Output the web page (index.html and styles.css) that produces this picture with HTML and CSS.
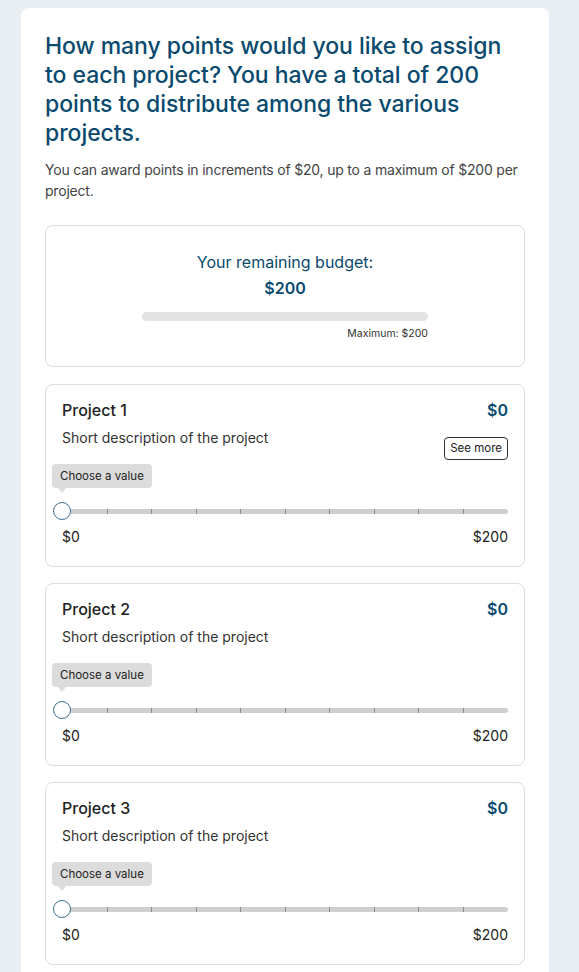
FILE: index.html
```html
<!DOCTYPE html>
<html lang="en">
<head>
<meta charset="utf-8">
<title>Budget allocation</title>
<link rel="stylesheet" href="styles.css">
</head>
<body>
<main class="panel">
  <h1 class="question">How many points would you like to assign to each project? You have a total of 200 points to distribute among the various projects.</h1>
  <p class="hint">You can award points in increments of $20, up to a maximum of $200 per project.</p>

  <section class="budget">
    <div class="budget-label">Your remaining budget:</div>
    <div class="budget-amount">$200</div>
    <div class="budget-bar-wrap">
      <div class="budget-bar"></div>
      <div class="budget-max">Maximum: $200</div>
    </div>
  </section>

  <section class="project">
    <div class="project-head">
      <div class="project-title">Project 1</div>
      <div class="project-value">$0</div>
      <div class="project-desc">Short description of the project</div>
      <button class="see-more">See more</button>
    </div>
    <div class="tooltip">Choose a value</div>
    <div class="slider">
      <div class="track">
        <span class="tick"></span><span class="tick"></span><span class="tick"></span><span class="tick"></span><span class="tick"></span><span class="tick"></span><span class="tick"></span><span class="tick"></span><span class="tick"></span><span class="tick"></span><span class="tick end"></span>
      </div>
      <div class="thumb"></div>
    </div>
    <div class="range-labels"><span>$0</span><span>$200</span></div>
  </section>

  <section class="project">
    <div class="project-head">
      <div class="project-title">Project 2</div>
      <div class="project-value">$0</div>
      <div class="project-desc">Short description of the project</div>
    </div>
    <div class="tooltip">Choose a value</div>
    <div class="slider">
      <div class="track">
        <span class="tick"></span><span class="tick"></span><span class="tick"></span><span class="tick"></span><span class="tick"></span><span class="tick"></span><span class="tick"></span><span class="tick"></span><span class="tick"></span><span class="tick"></span><span class="tick end"></span>
      </div>
      <div class="thumb"></div>
    </div>
    <div class="range-labels"><span>$0</span><span>$200</span></div>
  </section>

  <section class="project">
    <div class="project-head">
      <div class="project-title">Project 3</div>
      <div class="project-value">$0</div>
      <div class="project-desc">Short description of the project</div>
    </div>
    <div class="tooltip">Choose a value</div>
    <div class="slider">
      <div class="track">
        <span class="tick"></span><span class="tick"></span><span class="tick"></span><span class="tick"></span><span class="tick"></span><span class="tick"></span><span class="tick"></span><span class="tick"></span><span class="tick"></span><span class="tick"></span><span class="tick end"></span>
      </div>
      <div class="thumb"></div>
    </div>
    <div class="range-labels"><span>$0</span><span>$200</span></div>
  </section>
</main>
</body>
</html>
```
FILE: styles.css
```css
* { box-sizing: border-box; }
html, body { margin: 0; padding: 0; }
body {
  background: #e9eef2;
  font-family: "Inter", "Noto Sans", sans-serif;
  color: #222;
  padding: 8px 30px 0 21px;
}
.panel {
  background: #fff;
  border-radius: 8px 8px 0 0;
  padding: 24px 24px 40px 24px;
  min-height: 1000px;
}
.question {
  margin: 0;
  font-size: 23px;
  line-height: 29px;
  font-weight: 500;
  color: #0a4a6e;
  letter-spacing: -0.05px;
}
.hint {
  margin: 11px 0 0 0;
  font-size: 14px;
  line-height: 21px;
  color: #444;
  letter-spacing: -0.2px;
}
.budget {
  margin-top: 24px;
  border: 1px solid #ddd;
  border-radius: 8px;
  padding: 24px 0 24px;
  display: flex;
  flex-direction: column;
  align-items: center;
}
.budget-label {
  font-size: 16px;
  line-height: 24px;
  color: #0a4a6e;
}
.budget-amount {
  font-size: 16px;
  line-height: 24px;
  font-weight: 600;
  color: #0a4a6e;
  margin-top: 2px;
}
.budget-bar-wrap {
  width: 286px;
  margin-top: 12px;
  display: flex;
  flex-direction: column;
}
.budget-bar {
  height: 9px;
  border-radius: 5px;
  background: #e4e4e4;
}
.budget-max {
  align-self: flex-end;
  font-size: 10.5px;
  line-height: 16px;
  color: #333;
  margin-top: 5px;
}
.project {
  margin-top: 17px;
  border: 1px solid #ddd;
  border-radius: 8px;
  padding: 15px 16px 19px;
}
.project + .project {
  margin-top: 16px;
}
.project-head {
  display: grid;
  grid-template-columns: 1fr auto;
  row-gap: 8px;
  align-items: start;
}
.project-title {
  font-size: 16px;
  line-height: 20px;
  font-weight: 500;
  color: #222;
}
.project-value {
  font-size: 16px;
  line-height: 20px;
  font-weight: 600;
  color: #0a4a6e;
  justify-self: end;
}
.project-desc {
  font-size: 14px;
  line-height: 20px;
  color: #333;
}
.see-more {
  justify-self: end;
  margin: 9px 0 -12px 0;
  height: 23px;
  padding: 0 5px;
  font: inherit;
  font-size: 11.5px;
  color: #222;
  background: #fff;
  border: 1px solid #333;
  border-radius: 4px;
  line-height: 21px;
}
.tooltip {
  position: relative;
  display: inline-block;
  margin: 16px 0 0 -10px;
  height: 24px;
  padding: 0 8px;
  font-size: 11.5px;
  line-height: 24px;
  color: #222;
  background: #dcdcdc;
  border-radius: 4px;
}
.tooltip::after {
  content: "";
  position: absolute;
  left: 6px;
  bottom: -5px;
  border-left: 4px solid transparent;
  border-right: 4px solid transparent;
  border-top: 5px solid #dcdcdc;
}
.slider {
  position: relative;
  height: 18px;
  margin-top: 14px;
}
.track {
  position: absolute;
  left: 0;
  right: 0;
  top: 7px;
  height: 5px;
  background: #cfcfcf;
  border-radius: 0 3px 3px 0;
  display: flex;
  justify-content: space-between;
}
.tick {
  width: 1px;
  height: 5px;
  background: #8c8c8c;
}
.tick.end { background: transparent; }
.thumb {
  position: absolute;
  left: -9px;
  top: 0;
  width: 18px;
  height: 18px;
  border-radius: 50%;
  background: #fff;
  border: 1.5px solid #3f6f8f;
}
.range-labels {
  display: flex;
  justify-content: space-between;
  margin-top: 7px;
  font-size: 14px;
  line-height: 20px;
  color: #222;
}
```
